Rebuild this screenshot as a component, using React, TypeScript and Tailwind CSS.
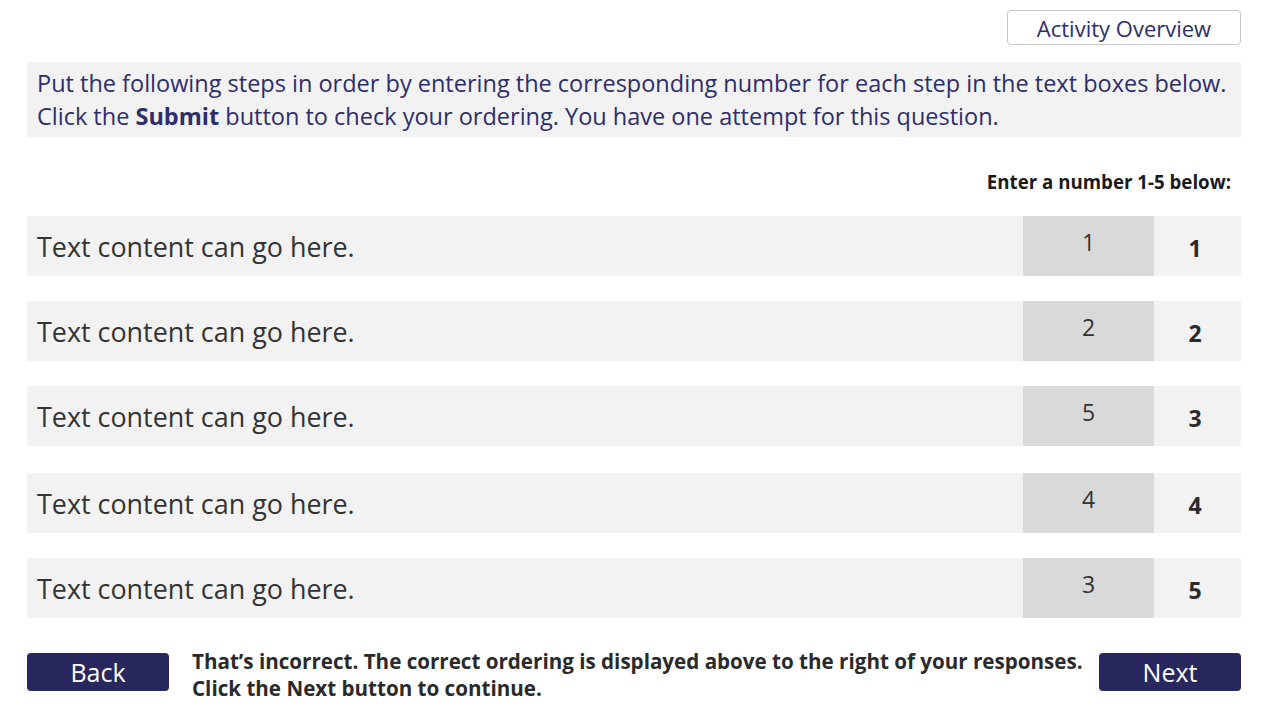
import React from 'react';

const rows = [
  { text: 'Text content can go here.', answer: '1', correct: '1', gap: 'mt-0' },
  { text: 'Text content can go here.', answer: '2', correct: '2', gap: 'mt-[25px]' },
  { text: 'Text content can go here.', answer: '5', correct: '3', gap: 'mt-[25px]' },
  { text: 'Text content can go here.', answer: '4', correct: '4', gap: 'mt-[27px]' },
  { text: 'Text content can go here.', answer: '3', correct: '5', gap: 'mt-[25px]' },
];

export default function App() {
  return (
    <div
      className="w-[1267px] h-[712px] bg-white pl-[27px] pr-[26px] pt-[10px] overflow-hidden"
      style={{ fontFamily: '"Open Sans", sans-serif' }}
    >
      {/* Top bar */}
      <div className="flex justify-end">
        <button className="w-[234px] h-[35px] border border-[#c8c8c8] rounded-[4px] bg-white text-[22px] text-[#2e2d6b] leading-none">
          Activity Overview
        </button>
      </div>

      {/* Instructions */}
      <div className="mt-[17px] bg-[#f2f2f2] h-[75px] pl-[10px] pt-[5px] text-[23.5px] leading-[33px] text-[#2e2d6b] whitespace-nowrap">
        <p>Put the following steps in order by entering the corresponding number for each step in the text boxes below.</p>
        <p>
          Click the <b className="font-bold">Submit</b> button to check your ordering. You have one attempt for this question.
        </p>
      </div>

      <div className="mr-[10px] mt-[33px] text-right text-[18.7px] font-bold text-[#1a1a1a] leading-[24px]">
        Enter a number 1-5 below:
      </div>

      {/* Rows */}
      <div className="mt-[22px] flex flex-col">
        {rows.map((r, i) => (
          <div key={i} className={`${r.gap} flex h-[60px] bg-[#f2f2f2]`}>
            <div className="flex-1 flex items-center pl-[10px] pt-[2px] text-[26.9px] text-[#333333]">{r.text}</div>
            <div className="w-[131px] bg-[#d9d9d9] flex justify-center pt-[11px] text-[23px] text-[#333333] leading-[30px]">
              {r.answer}
            </div>
            <div className="w-[87px] flex items-center justify-center pt-[4px] pr-[5px] text-[23px] font-bold text-[#2a2a2a]">
              {r.correct}
            </div>
          </div>
        ))}
      </div>

      {/* Footer */}
      <div className="mt-[35px] flex items-start">
        <button className="w-[142px] h-[38px] rounded-[4px] bg-[#28285f] text-white text-[25px] leading-none">
          Back
        </button>
        <div className="flex-1 pl-[23px] -mt-[5px] text-[20.6px] font-bold leading-[27px] text-[#2a2a2a] whitespace-nowrap">
          <p>That’s incorrect. The correct ordering is displayed above to the right of your responses.</p>
          <p>Click the Next button to continue.</p>
        </div>
        <button className="w-[142px] h-[38px] rounded-[4px] bg-[#28285f] text-white text-[25px] leading-none">
          Next
        </button>
      </div>
    </div>
  );
}
